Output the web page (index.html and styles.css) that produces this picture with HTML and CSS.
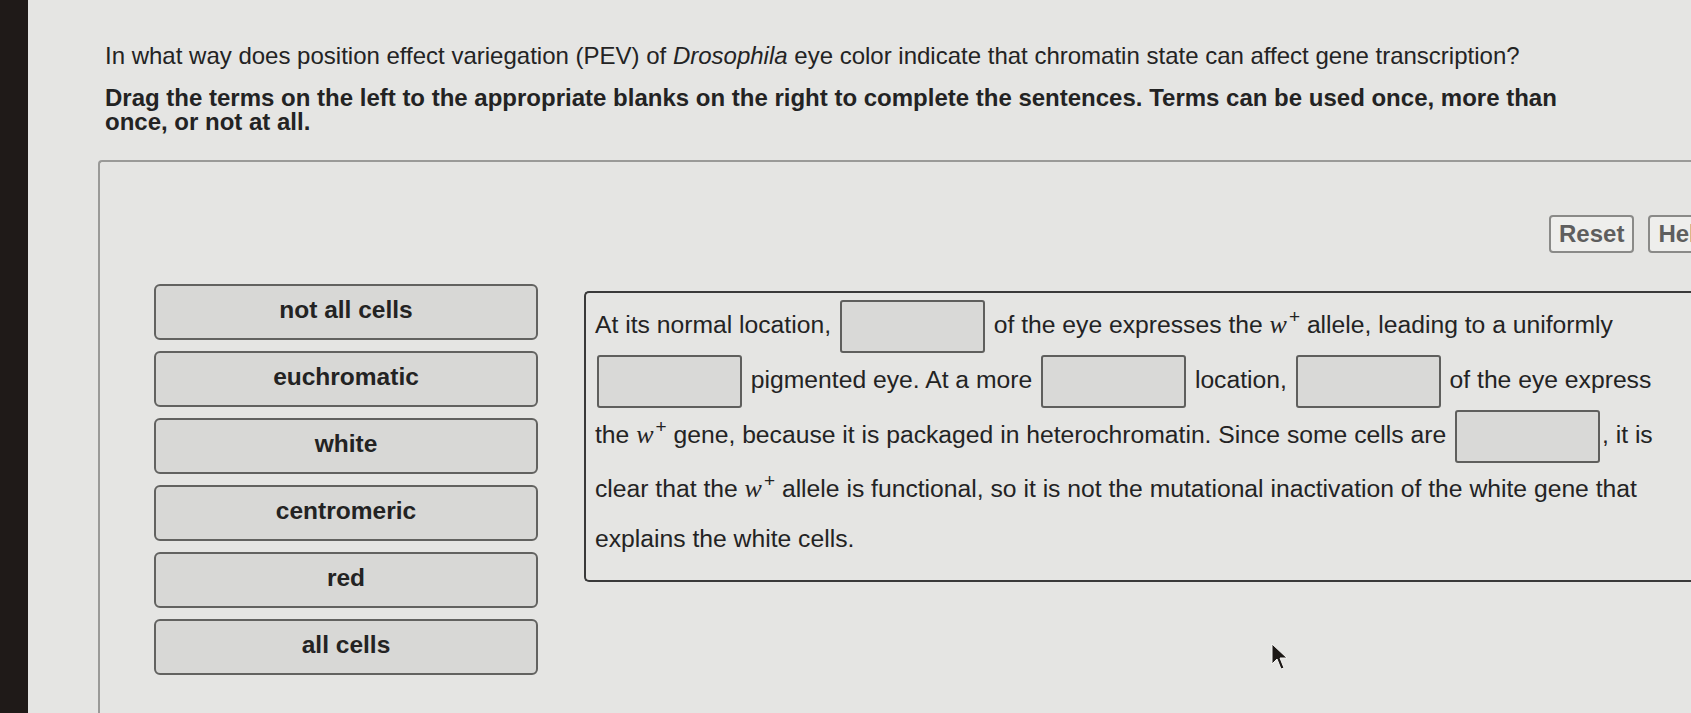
FILE: index.html
```html
<!DOCTYPE html>
<html lang="en">
<head>
    <meta charset="UTF-8">
    <meta name="viewport" content="width=device-width, initial-scale=1.0">
    <title>Position Effect Variegation</title>
    <link rel="stylesheet" href="styles.css">
</head>
<body>
    <div class="page">
        <div class="question">
            <p class="prompt">In what way does position effect variegation (PEV) of <i>Drosophila</i> eye color indicate that chromatin state can affect gene transcription?</p>
            <p class="instructions">Drag the terms on the left to the appropriate blanks on the right to complete the sentences. Terms can be used once, more than once, or not at all.</p>
        </div>

        <div class="activity">
            <div class="toolbar">
                <button class="tool-btn">Reset</button>
                <button class="tool-btn">Help</button>
            </div>

            <div class="workspace">
                <div class="terms">
                    <div class="term">not all cells</div>
                    <div class="term">euchromatic</div>
                    <div class="term">white</div>
                    <div class="term">centromeric</div>
                    <div class="term">red</div>
                    <div class="term">all cells</div>
                </div>

                <div class="sentences">
                    <p>At its normal location, <span class="blank"></span> of the eye expresses the <span class="gene">w<sup>+</sup></span> allele, leading to a uniformly <span class="blank"></span> pigmented eye. At a more <span class="blank"></span> location, <span class="blank"></span> of the eye express the <span class="gene">w<sup>+</sup></span> gene, because it is packaged in heterochromatin. Since some cells are <span class="blank"></span>, it is clear that the <span class="gene">w<sup>+</sup></span> allele is functional, so it is not the mutational inactivation of the white gene that explains the white cells.</p>
                </div>
            </div>
        </div>
    </div>

    <!-- mouse pointer -->
    <svg class="pointer" width="18" height="28" viewBox="0 0 18 28">
        <path d="M1 1 L1 21 L6 16 L10 26 L13 25 L9 15 L16 15 Z" fill="#1c1816" stroke="#f4f4f2" stroke-width="1"/>
    </svg>
</body>
</html>
```

FILE: styles.css
```css
* {
    margin: 0;
    padding: 0;
    box-sizing: border-box;
}
html, body {
    height: 100%;
}
body {
    background-color: #e5e5e3;
    border-left: 28px solid #1f1a18;
    font-family: "Liberation Sans", Arial, sans-serif;
    color: #232323;
    overflow: hidden;
    position: relative;
}
.page {
    padding-top: 44px;
    padding-left: 70px;
    width: 1760px;
}
.question {
    padding-left: 7px;
}
.prompt {
    font-size: 24px;
    line-height: 24px;
}
.instructions {
    margin-top: 18px;
    font-size: 24px;
    line-height: 24px;
    font-weight: bold;
    width: 1480px;
}
.activity {
    margin-top: 26px;
    border: 2px solid #9a9a98;
    border-right: none;
    border-radius: 4px 0 0 0;
    height: 700px;
    padding-top: 53px;
}
.toolbar {
    display: flex;
    justify-content: flex-start;
    gap: 14px;
    padding-left: 1449px;
}
.tool-btn {
    font-family: "Liberation Sans", Arial, sans-serif;
    font-size: 24px;
    font-weight: bold;
    color: #5e5e5e;
    background-color: #eeeeec;
    border: 2px solid #8a8a88;
    border-radius: 4px;
    height: 38px;
    padding: 0 8px;
}
.workspace {
    display: flex;
    align-items: flex-start;
    gap: 46px;
    margin-top: 31px;
    padding-left: 54px;
}
.terms {
    display: flex;
    flex-direction: column;
    gap: 11px;
    width: 384px;
    flex-shrink: 0;
}
.term {
    height: 56px;
    line-height: 48px;
    text-align: center;
    font-size: 24.5px;
    font-weight: bold;
    background-color: #d8d8d6;
    border: 2px solid #626260;
    border-radius: 6px;
}
.sentences {
    flex: 1;
    border: 2px solid #3a3a3a;
    border-right: none;
    border-radius: 5px 0 0 5px;
    padding: 6px 0 16px 9px;
    margin-top: 7px;
}
.sentences p {
    width: 1068px;
    font-size: 24.7px;
    line-height: 50px;
}
.blank {
    display: inline-block;
    width: 145px;
    height: 53px;
    vertical-align: middle;
    margin: 1px 2px;
    background-color: #d9d9d7;
    border: 2px solid #5f5f5d;
    border-radius: 3px;
}
.gene {
    font-family: "Liberation Serif", "Times New Roman", serif;
    font-style: italic;
    font-size: 26px;
}
.gene sup {
    font-family: "Liberation Sans", Arial, sans-serif;
    font-style: normal;
    font-weight: 300;
    font-size: 19px;
    line-height: 0;
    margin-left: 2px;
}
.pointer {
    position: absolute;
    left: 1243px;
    top: 643px;
}
```
